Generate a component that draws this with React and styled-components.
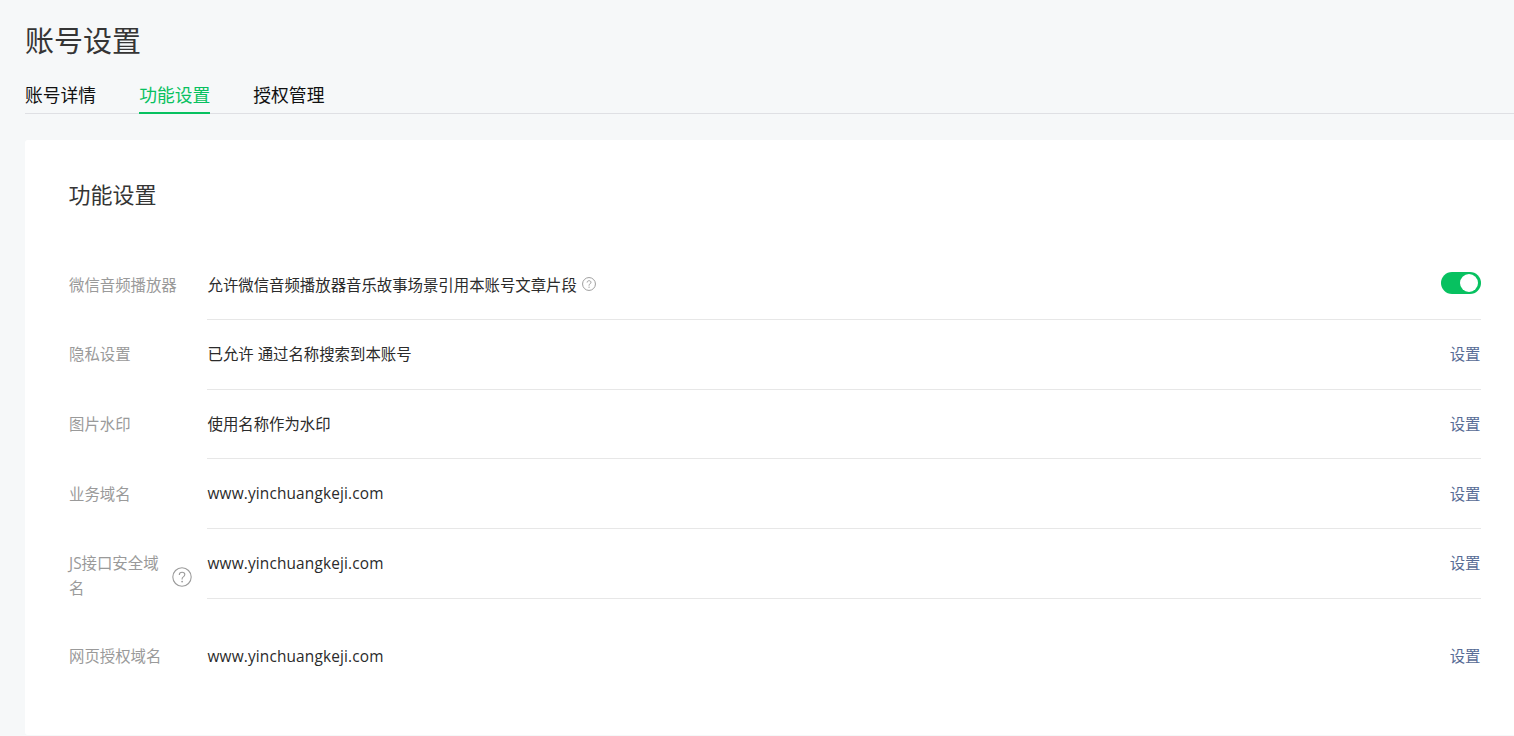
import React from 'react';
import styled, { createGlobalStyle } from 'styled-components';

const GlobalStyle = createGlobalStyle`
  html, body {
    margin: 0;
    padding: 0;
    background: #f6f8f9;
    overflow: hidden;
  }
  body {
    font-family: "Open Sans", "Noto Sans CJK SC", sans-serif;
    color: #353535;
  }
`;

const Page = styled.div`
  height: 736px;
  padding: 0 0 0 25px;
  box-sizing: border-box;
  overflow: hidden;
`;

const PageTitle = styled.h1`
  margin: 0;
  padding-top: 21px;
  font-size: 29px;
  font-weight: 400;
  line-height: 40px;
  color: #353535;
`;

const Tabs = styled.div`
  display: flex;
  gap: 43px;
  margin-top: 14px;
  height: 39px;
  box-sizing: border-box;
  border-bottom: 1px solid #dfe0e4;
`;

const Tab = styled.div`
  height: 39px;
  box-sizing: border-box;
  padding-top: 7px;
  font-size: 17.8px;
  line-height: 26px;
  color: ${(p) => (p.$active ? '#07c160' : '#111')};
  border-bottom: ${(p) => (p.$active ? '2px solid #07c160' : 'none')};
`;

const Card = styled.section`
  margin-top: 26px;
  height: 595px;
  box-sizing: border-box;
  padding: 39px 33px 0 44px;
  background: #fff;
  border-radius: 3px 0 0 3px;
`;

const CardTitle = styled.h2`
  margin: 0 0 41.6px -0.5px;
  font-size: 22px;
  font-weight: 400;
  line-height: 30px;
  color: #353535;
`;

const Row = styled.div`
  display: flex;
  align-items: flex-start;
`;

const Label = styled.div`
  flex: none;
  display: flex;
  align-items: center;
  width: 138px;
  box-sizing: border-box;
  padding: 22.3px 0 20.3px;
  font-size: 15.4px;
  line-height: 25px;
  color: #9a9a9a;
`;

const LabelText = styled.span`
  width: ${(p) => (p.$wide ? 'auto' : '100px')};
  flex: none;
`;

const Content = styled.div`
  flex: 1;
  display: flex;
  align-items: center;
  justify-content: space-between;
  height: 69.6px;
  box-sizing: border-box;
  padding-bottom: 1px;
  border-bottom: ${(p) => (p.$last ? 'none' : '1px solid #e7e7e7')};
  font-size: 15.4px;
  color: #2b2b2b;
`;

const Value = styled.div`
  display: flex;
  align-items: center;
  padding-left: 0.5px;
`;

const Domain = styled(Value)`
  letter-spacing: 0.15px;
  padding-top: 1px;
`;

const SetLink = styled.a`
  color: #576b95;
  font-size: 15.4px;
  text-decoration: none;
  cursor: pointer;
  margin-right: 0.5px;
`;

const Switch = styled.div`
  position: relative;
  width: 40px;
  height: 22px;
  margin-bottom: 2px;
  border-radius: 11px;
  background: #07c160;
  &::after {
    content: '';
    position: absolute;
    top: 2px;
    right: 3px;
    width: 18px;
    height: 18px;
    border-radius: 50%;
    background: #fff;
  }
`;

const HelpSvg = styled.svg`
  flex: none;
  display: block;
  margin-left: ${(p) => p.$gap}px;
  margin-top: ${(p) => p.$drop}px;
`;

const Help = ({ size, gap, drop = 0 }) => (
  <HelpSvg $gap={gap} $drop={drop} width={size} height={size} viewBox="0 0 20 20" fill="none">
    <circle cx="10" cy="10" r="9.2" stroke="#9c9c9c" strokeWidth={size < 16 ? 1.4 : 1.1} />
    <path
      d="M7.3 7.9c0-1.6 1.2-2.6 2.8-2.6s2.7 1 2.7 2.3c0 1.1-.6 1.7-1.5 2.3-.8.5-1.2 1-1.2 2v.5"
      stroke="#9c9c9c"
      strokeWidth={size < 16 ? 1.4 : 1.1}
    />
    <circle cx="10.1" cy="14.6" r=".9" fill="#9c9c9c" />
  </HelpSvg>
);

const domain = 'www.yinchuangkeji.com';

export default function App() {
  return (
    <Page>
      <GlobalStyle />
      <PageTitle>账号设置</PageTitle>
      <Tabs>
        <Tab>账号详情</Tab>
        <Tab $active>功能设置</Tab>
        <Tab>授权管理</Tab>
      </Tabs>
      <Card>
        <CardTitle>功能设置</CardTitle>
        <Row>
          <Label><LabelText $wide>微信音频播放器</LabelText></Label>
          <Content>
            <Value>
              允许微信音频播放器音乐故事场景引用本账号文章片段
              <Help size={14} gap={5} />
            </Value>
            <Switch />
          </Content>
        </Row>
        <Row>
          <Label><LabelText>隐私设置</LabelText></Label>
          <Content>
            <Value>已允许 通过名称搜索到本账号</Value>
            <SetLink>设置</SetLink>
          </Content>
        </Row>
        <Row>
          <Label><LabelText>图片水印</LabelText></Label>
          <Content>
            <Value>使用名称作为水印</Value>
            <SetLink>设置</SetLink>
          </Content>
        </Row>
        <Row>
          <Label><LabelText>业务域名</LabelText></Label>
          <Content>
            <Domain>{domain}</Domain>
            <SetLink>设置</SetLink>
          </Content>
        </Row>
        <Row>
          <Label>
            <LabelText>JS接口安全域名</LabelText>
            <Help size={20} gap={3} drop={2} />
          </Label>
          <Content>
            <Domain>{domain}</Domain>
            <SetLink>设置</SetLink>
          </Content>
        </Row>
        <Row>
          <Label><LabelText>网页授权域名</LabelText></Label>
          <Content $last>
            <Domain>{domain}</Domain>
            <SetLink>设置</SetLink>
          </Content>
        </Row>
      </Card>
    </Page>
  );
}
